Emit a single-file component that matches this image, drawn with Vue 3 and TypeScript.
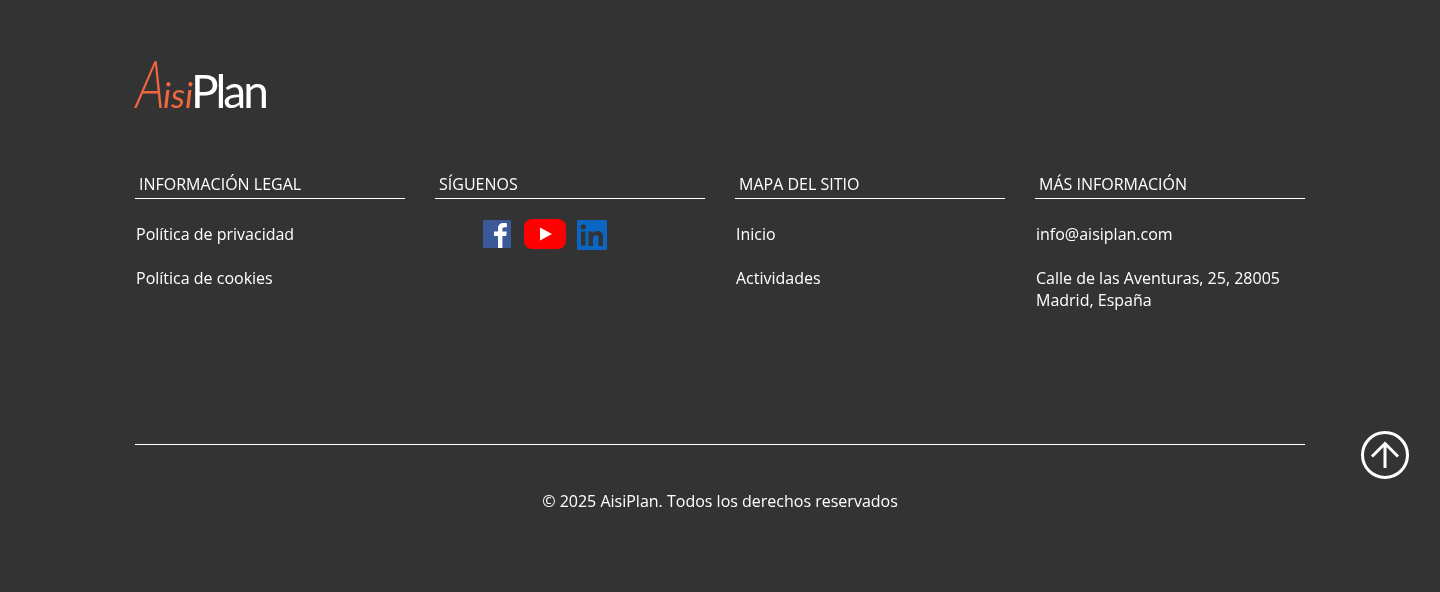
<template>
  <footer class="footer">
    <div class="inner">
      <div class="logo">
        <span class="logo-a"><span class="logo-cap">A</span>isi</span><span class="logo-b">Plan</span>
      </div>
      <div class="columns">
        <section v-for="col in columns" :key="col.title" class="col">
          <h3 class="col-title">{{ col.title }}</h3>
          <template v-if="col.links">
            <a v-for="link in col.links" :key="link" class="link">{{ link }}</a>
          </template>
          <div v-else class="social">
            <svg class="fb" width="28" height="28" viewBox="0 0 28 28">
              <rect width="28" height="28" rx="1" fill="#3b5998" />
              <path d="M15 28V16h-4v-4.6h4V8.6C15 4.8 17.300 3 20.600 3c1.600 0 2.900.1 3.300.2v4h-2.300c-1.800 0-2.200.9-2.200 2.100v2.100h4.400l-.6 4.600h-3.800v12z" fill="#fff" />
            </svg>
            <svg class="yt" width="42" height="30" viewBox="0 0 42 30">
              <rect width="42" height="30" rx="8" fill="#ff0000" />
              <path d="M16 8.500l12 6.500-12 6.500z" fill="#fff" />
            </svg>
            <svg class="li" width="30" height="30" viewBox="0 0 30 30">
              <rect width="30" height="30" rx="1" fill="#0a66c2" />
              <rect x="4" y="11.500" width="4.500" height="14" fill="#333" />
              <circle cx="6.250" cy="6.800" r="2.600" fill="#333" />
              <path d="M11.500 11.500h4.300v2c.8-1.400 2.500-2.400 4.600-2.400 4.100 0 5.600 2.500 5.600 6.500v8.400h-4.500v-7.500c0-2-.6-3.400-2.400-3.400-2 0-3.100 1.400-3.100 3.400v7.500h-4.500z" fill="#333" />
            </svg>
          </div>
        </section>
      </div>
      <div class="bottom">
        <p class="copy">© 2025 AisiPlan. Todos los derechos reservados</p>
      </div>
    </div>
    <a class="to-top" aria-label="Volver arriba">
      <svg width="48" height="48" viewBox="0 0 48 48" fill="none" stroke="#fff" stroke-width="3">
        <circle cx="24" cy="24" r="22.500" />
        <path d="M24 37V13M11 25.500L24 12.500l13 13" />
      </svg>
    </a>
  </footer>
</template>

<script setup lang="ts">
interface FooterColumn {
  title: string;
  links?: string[];
}

const columns: FooterColumn[] = [
  { title: "INFORMACIÓN LEGAL", links: ["Política de privacidad", "Política de cookies"] },
  { title: "SÍGUENOS" },
  { title: "MAPA DEL SITIO", links: ["Inicio", "Actividades"] },
  {
    title: "MÁS INFORMACIÓN",
    links: ["info@aisiplan.com", "Calle de las Aventuras, 25, 28005 Madrid, España"],
  },
];
</script>

<style>
html,
body {
  margin: 0;
  background: #333;
}
</style>

<style scoped>
.footer {
  position: relative;
  height: 592px;
  background: #333;
  color: #fff;
  font-family: "Open Sans", sans-serif;
  font-size: 16px;
  line-height: 22px;
  overflow: hidden;
}

.inner {
  width: 1170px;
  margin: 0 auto;
  padding-top: 54px;
  will-change: transform;
}

.logo {
  display: flex;
  align-items: baseline;
  height: 57px;
  line-height: 57px;
  font-family: Lato, sans-serif;
}

.logo-a {
  color: #f0673f;
  font-size: 35px;
  font-style: italic;
  font-weight: 400;
  width: 56px;
  white-space: nowrap;
}

.logo-cap {
  display: inline-block;
  font-size: 66px;
  font-weight: 300;
  line-height: 57px;
  transform: scaleX(0.72) skewX(-6deg);
  transform-origin: left bottom;
  width: 28px;
}

.logo-b {
  font-size: 46px;
  font-weight: 400;
  letter-spacing: -3px;
}

.columns {
  display: grid;
  grid-template-columns: repeat(4, 270px);
  column-gap: 30px;
  margin-top: 62px;
}

.col-title {
  margin: 0 0 24px;
  padding: 0 4px 3px;
  border-bottom: 1px solid #fff;
  font-size: 16px;
  font-weight: 400;
  line-height: 22px;
}

.link {
  display: block;
  margin: 0 0 22px 1px;
}

.social {
  display: flex;
  align-items: flex-start;
  padding-left: 48px;
  margin-top: -4px;
}

.fb {
  margin-top: 1px;
}

.yt {
  margin-left: 13px;
}

.li {
  margin: 1px 0 0 11px;
}

.bottom {
  margin-top: 111px;
  border-top: 1px solid #fff;
}

.copy {
  margin: 45px 0 0;
  text-align: center;
}

.to-top {
  position: absolute;
  left: 1361px;
  top: 431px;
  width: 48px;
  height: 48px;
}

.to-top svg {
  display: block;
}
</style>
